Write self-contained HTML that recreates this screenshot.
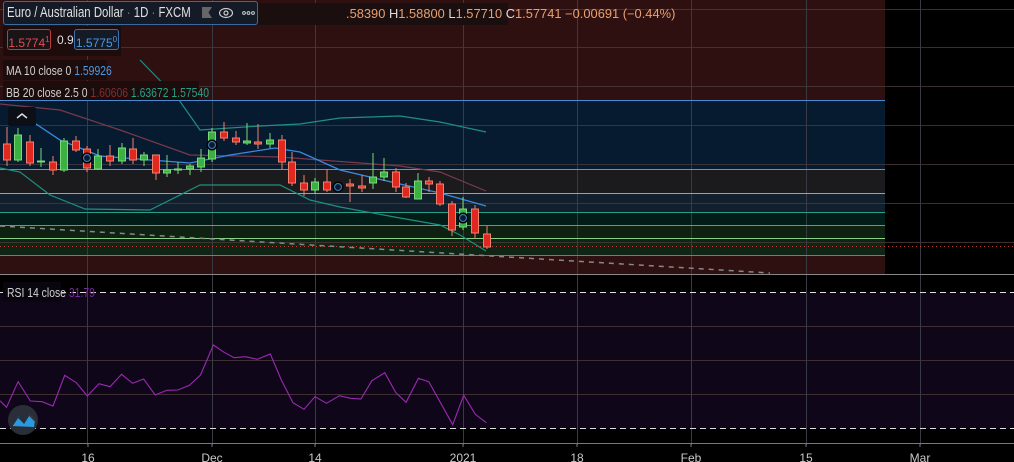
<!DOCTYPE html>
<html><head><meta charset="utf-8"><style>
html,body{margin:0;padding:0;background:#000;width:1014px;height:462px;overflow:hidden;font-family:"Liberation Sans",sans-serif}
.abs{position:absolute}
.lg{color:#d0d0d0;font-size:12px;white-space:nowrap;transform-origin:left top}
.c{transform:scaleX(0.8)}
</style></head><body>
<svg class="abs" style="left:0;top:0" width="1014" height="462" xmlns="http://www.w3.org/2000/svg">
<rect x="0" y="0" width="885" height="274" fill="#2f1010"/>
<rect x="0" y="100" width="885" height="69" fill="#071b30"/>
<rect x="0" y="169" width="885" height="24" fill="#1b1b1d"/>
<rect x="0" y="193" width="885" height="19" fill="#12202d"/>
<rect x="0" y="212" width="885" height="13" fill="#021c18"/>
<rect x="0" y="225" width="885" height="13" fill="#0f2212"/>
<rect x="0" y="238" width="885" height="17" fill="#102515"/>
<rect x="0" y="255" width="885" height="19" fill="#2f1010"/>
<rect x="0" y="292" width="1014" height="137" fill="#10061a"/>
<g stroke="#4a3a3a" stroke-width="1" opacity="0.8">
<line x1="0" y1="9.5" x2="1014" y2="9.5"/><line x1="0" y1="47.5" x2="1014" y2="47.5"/><line x1="0" y1="86.5" x2="1014" y2="86.5"/><line x1="0" y1="125.5" x2="1014" y2="125.5"/><line x1="0" y1="164.5" x2="1014" y2="164.5"/><line x1="0" y1="203.5" x2="1014" y2="203.5"/><line x1="0" y1="242.5" x2="1014" y2="242.5"/>
<line x1="0" y1="326.5" x2="1014" y2="326.5"/><line x1="0" y1="360.5" x2="1014" y2="360.5"/><line x1="0" y1="394.5" x2="1014" y2="394.5"/>
</g>
<g stroke="#3a3a44" stroke-width="1">
<line x1="87.5" y1="0" x2="87.5" y2="445"/><line x1="212.5" y1="0" x2="212.5" y2="445"/><line x1="315.5" y1="0" x2="315.5" y2="445"/><line x1="463.5" y1="0" x2="463.5" y2="445"/><line x1="577.5" y1="0" x2="577.5" y2="445"/><line x1="691.5" y1="0" x2="691.5" y2="445"/><line x1="806.5" y1="0" x2="806.5" y2="445"/><line x1="920.5" y1="0" x2="920.5" y2="445"/>
</g>
<g stroke-width="1">
<line x1="0" y1="100.5" x2="885" y2="100.5" stroke="#4a8ad0"/>
<line x1="0" y1="169.5" x2="885" y2="169.5" stroke="#8a8a90"/>
<line x1="0" y1="193.5" x2="885" y2="193.5" stroke="#6aaee0"/>
<line x1="0" y1="212.5" x2="885" y2="212.5" stroke="#26a08a"/>
<line x1="0" y1="225.5" x2="885" y2="225.5" stroke="#4caf50"/>
<line x1="0" y1="238.5" x2="885" y2="238.5" stroke="#8ad08a"/>
<line x1="0" y1="246.5" x2="1014" y2="246.5" stroke="#c04030" stroke-dasharray="1 3"/>
<line x1="0" y1="255.5" x2="885" y2="255.5" stroke="#e0503a"/>
<line x1="0" y1="274.5" x2="1014" y2="274.5" stroke="#888"/>
<line x1="0" y1="292.5" x2="1014" y2="292.5" stroke="#ddd" stroke-dasharray="6 4"/>
<line x1="0" y1="428.5" x2="1014" y2="428.5" stroke="#ddd" stroke-dasharray="6 4"/>
<line x1="0" y1="443.5" x2="1014" y2="443.5" stroke="#777"/>
</g>
<line x1="0" y1="226" x2="770" y2="273" stroke="#888" stroke-dasharray="5 5" stroke-width="1.5"/>
<polyline fill="none" stroke="#1f8f80" stroke-width="1.2" points="140,60 179,100 200,130 260,126 300,124 340,118 400,116 440,122 486,132"/>
<polyline fill="none" stroke="#1f8f80" stroke-width="1.2" points="0,168 20,172 50,195 85,209 150,210 200,185 280,185 310,200 340,207 400,218 440,225 460,235 486,251"/>
<polyline fill="none" stroke="#7a3a4a" stroke-width="1.2" points="0,104 60,110 120,130 190,155 280,157 320,160 400,166 440,172 486,191"/>
<polyline fill="none" stroke="#3a8ae0" stroke-width="1.3" points="30,120 60,140 100,156 150,160 190,163 230,155 275,148 300,152 340,170 400,184 440,193 486,206"/>
<g stroke-width="1">
<g stroke="#f08070" fill="#e0281e">
<line x1="7" y1="127" x2="7" y2="166"/><rect x="3.5" y="144" width="7" height="16"/>
<line x1="30" y1="135" x2="30" y2="166"/><rect x="26.5" y="142" width="7" height="21"/>
<line x1="53" y1="156" x2="53" y2="175"/><rect x="49.5" y="162" width="7" height="8"/>
<line x1="76" y1="136" x2="76" y2="152"/><rect x="72.5" y="141" width="7" height="9"/>
<line x1="87" y1="146" x2="87" y2="172"/><rect x="83.5" y="149" width="7" height="19"/>
<line x1="110" y1="145" x2="110" y2="166"/><rect x="106.5" y="156" width="7" height="5"/>
<line x1="133" y1="138" x2="133" y2="164"/><rect x="129.5" y="149" width="7" height="11"/>
<line x1="156" y1="155" x2="156" y2="180"/><rect x="152.5" y="155" width="7" height="18"/>
<line x1="224" y1="122" x2="224" y2="141"/><rect x="220.5" y="132" width="7" height="6"/>
<line x1="236" y1="131" x2="236" y2="145"/><rect x="232.5" y="138" width="7" height="4"/>
<line x1="258" y1="124" x2="258" y2="149"/><rect x="254.5" y="142" width="7" height="2"/>
<line x1="282" y1="135" x2="282" y2="169"/><rect x="278.5" y="140" width="7" height="22"/>
<line x1="292" y1="152" x2="292" y2="186"/><rect x="288.5" y="162" width="7" height="21"/>
<line x1="304" y1="175" x2="304" y2="196"/><rect x="300.5" y="183" width="7" height="7"/>
<line x1="327" y1="169" x2="327" y2="192"/><rect x="323.5" y="182" width="7" height="8"/>
<line x1="350" y1="179" x2="350" y2="202"/><rect x="346.5" y="184" width="7" height="2"/>
<line x1="362" y1="175" x2="362" y2="192"/><rect x="358.5" y="186" width="7" height="2"/>
<line x1="396" y1="168" x2="396" y2="192"/><rect x="392.5" y="172" width="7" height="15"/>
<line x1="406" y1="183" x2="406" y2="198"/><rect x="402.5" y="187" width="7" height="10"/>
<line x1="429" y1="177" x2="429" y2="192"/><rect x="425.5" y="181" width="7" height="3"/>
<line x1="440" y1="181" x2="440" y2="206"/><rect x="436.5" y="184" width="7" height="20"/>
<line x1="452" y1="201" x2="452" y2="236"/><rect x="448.5" y="204" width="7" height="26"/>
<line x1="475" y1="205" x2="475" y2="239"/><rect x="471.5" y="209" width="7" height="24"/>
<line x1="487" y1="226" x2="487" y2="249"/><rect x="483.5" y="234" width="7" height="13"/>
</g>
<g stroke="#7ada7a" fill="#3cb043">
<line x1="18" y1="128" x2="18" y2="162"/><rect x="14.5" y="135" width="7" height="25"/>
<line x1="41" y1="148" x2="41" y2="167"/><rect x="37.5" y="161" width="7" height="1"/>
<line x1="64" y1="138" x2="64" y2="172"/><rect x="60.5" y="141" width="7" height="29"/>
<line x1="98" y1="149" x2="98" y2="170"/><rect x="94.5" y="156" width="7" height="13"/>
<line x1="122" y1="143" x2="122" y2="164"/><rect x="118.5" y="148" width="7" height="13"/>
<line x1="144" y1="152" x2="144" y2="166"/><rect x="140.5" y="155" width="7" height="5"/>
<line x1="167" y1="155" x2="167" y2="177"/><rect x="163.5" y="170" width="7" height="3"/>
<line x1="178" y1="162" x2="178" y2="174"/><rect x="174.5" y="169" width="7" height="1"/>
<line x1="190" y1="164" x2="190" y2="175"/><rect x="186.5" y="166" width="7" height="3"/>
<line x1="201" y1="149" x2="201" y2="172"/><rect x="197.5" y="158" width="7" height="9"/>
<line x1="212" y1="128" x2="212" y2="162"/><rect x="208.5" y="132" width="7" height="27"/>
<line x1="247" y1="123" x2="247" y2="145"/><rect x="243.5" y="141" width="7" height="2"/>
<line x1="270" y1="133" x2="270" y2="148"/><rect x="266.5" y="140" width="7" height="4"/>
<line x1="315" y1="178" x2="315" y2="194"/><rect x="311.5" y="182" width="7" height="8"/>
<line x1="373" y1="153" x2="373" y2="189"/><rect x="369.5" y="177" width="7" height="6"/>
<line x1="384" y1="158" x2="384" y2="181"/><rect x="380.5" y="172" width="7" height="5"/>
<line x1="418" y1="173" x2="418" y2="199"/><rect x="414.5" y="181" width="7" height="18"/>
<line x1="463" y1="197" x2="463" y2="230"/><rect x="459.5" y="209" width="7" height="18"/>
</g>
<g fill="#0a1a30" stroke="#000" stroke-width="2">
<circle cx="87" cy="158" r="4.5"/><circle cx="212" cy="145" r="4.5"/><circle cx="338" cy="187" r="4.5"/><circle cx="463" cy="218" r="4.5"/>
</g>
<g fill="none" stroke="#3a70a8" stroke-width="1.3">
<circle cx="87" cy="158" r="3.5"/><circle cx="212" cy="145" r="3.5"/><circle cx="338" cy="187" r="3.5"/><circle cx="463" cy="218" r="3.5"/>
</g>
</g>
<rect x="8" y="107" width="28" height="19" rx="2" fill="#0c0f15"/>
<polyline points="17,118 22,114 27,118" fill="none" stroke="#ddd" stroke-width="1.5"/>
<polyline fill="none" stroke="#9a2ab0" stroke-width="1.1" points="0,400.7 6.5,407.3 18.1,381.7 30.4,401 42,401.7 53,406 64.7,375.3 76.3,382.7 87.3,396 99,383.7 110,386.7 121.6,374.3 132.6,383.3 143.6,379 155.2,395 166.8,390.3 177.8,390 189.5,385.3 200.5,375 213.4,345 223.1,351.7 234.1,357.7 245.7,356.7 257.4,359.3 270.3,354 281.3,380 293,402.7 304,409.3 315,396.7 326.6,403.3 339.5,395.7 350.5,398.3 360.9,399 371.9,380.7 384.8,372.7 395.8,392.7 406.1,402.3 418.4,378.3 428.8,381.7 452.7,424.7 463.7,395.3 475.3,414.3 486.3,422.7"/>
<circle cx="23" cy="420" r="15" fill="#2a2e38"/>
<path d="M12,426 L18,416 L24,423 L29,414 L35,420 L34,427 Z" fill="#2a9ae0"/>
<polyline points="12,426 18,417 24,423 29,415 35,421" fill="none" stroke="#2a2e38" stroke-width="1.2"/>
<g fill="#c8c8c8" font-size="12" font-family="Liberation Sans,sans-serif" text-anchor="middle">
<text x="88" y="462">16</text><text x="212" y="462">Dec</text><text x="315" y="462">14</text><text x="463" y="462">2021</text><text x="577" y="462">18</text><text x="691" y="462">Feb</text><text x="806" y="462">15</text><text x="920" y="462">Mar</text>
</g>
<g stroke="#777"><line x1="88" y1="444" x2="88" y2="447"/><line x1="212" y1="444" x2="212" y2="447"/><line x1="315" y1="444" x2="315" y2="447"/><line x1="463" y1="444" x2="463" y2="447"/><line x1="577" y1="444" x2="577" y2="447"/><line x1="691" y1="444" x2="691" y2="447"/><line x1="806" y1="444" x2="806" y2="447"/><line x1="920" y1="444" x2="920" y2="447"/></g>
</svg>

<div class="abs" style="left:258px;top:3px;width:250px;height:22px;background:#1a0e0e"></div>
<div class="abs lg" style="left:346px;top:7px;font-size:12.5px;color:#e8a070;transform:scaleX(1.03)">.58390 <span style="color:#ddd">H</span>1.58800 <span style="color:#ddd">L</span>1.57710 <span style="color:#ddd">C</span>1.57741 −0.00691 (−0.44%)</div>
<div class="abs" style="left:3px;top:1px;width:253px;height:22px;background:#141a26;border:1px solid #3a6aa0;border-radius:3px"></div>
<div class="abs lg" style="left:7px;top:4px;font-size:15px;color:#e0e0e0;transform:scaleX(0.76)">Euro / Australian Dollar <span style="color:#777">·</span> 1D <span style="color:#777">·</span> FXCM</div>
<div class="abs" style="left:202px;top:7px;width:10px;height:11px;background:#666;clip-path:polygon(0 0,100% 0,65% 50%,100% 100%,0 100%)"></div>
<svg class="abs" style="left:219px;top:5px" width="40" height="16"><ellipse cx="7" cy="8" rx="6.5" ry="4.5" fill="none" stroke="#ccc" stroke-width="1.2"/><circle cx="7" cy="8" r="2" fill="none" stroke="#ccc" stroke-width="1.2"/><circle cx="25" cy="8" r="1.4" fill="none" stroke="#ccc"/><circle cx="29.5" cy="8" r="1.4" fill="none" stroke="#ccc"/><circle cx="34" cy="8" r="1.4" fill="none" stroke="#ccc"/></svg>
<div class="abs" style="left:3px;top:26px;width:118px;height:30px;background:#1d0c0c"></div>
<div class="abs lg" style="left:7px;top:29px;width:42px;height:19px;border:1px solid #c0383a;border-radius:3px;background:#181418;color:#e05050;font-size:12px;line-height:19px;text-align:center">1.5774<sup style="font-size:8px">1</sup></div>
<div class="abs lg" style="left:57px;top:33px;color:#ddd">0.9</div>
<div class="abs lg" style="left:74px;top:29px;width:43px;height:19px;border:1px solid #3a70b0;border-radius:3px;background:#141a26;color:#4a9ae8;font-size:12px;line-height:19px;text-align:center">1.5775<sup style="font-size:8px">0</sup></div>
<div class="abs" style="left:3px;top:60px;width:104px;height:20px;background:#1d0c0c"></div>
<div class="abs lg c" style="left:6px;top:63px;font-size:13px;transform:scaleX(0.8)">MA 10 close 0 <span style="color:#4a9ae8">1.59926</span></div>
<div class="abs" style="left:3px;top:81px;width:196px;height:19px;background:#1d0c0c"></div>
<div class="abs lg c" style="left:6px;top:85px;font-size:13px">BB 20 close 2.5 0 <span style="color:#8a2a2a">1.60606</span> <span style="color:#26a08a">1.63672</span> <span style="color:#26a08a">1.57540</span></div>
<div class="abs" style="left:3px;top:282px;width:58px;height:20px;background:#0a0610"></div>
<div class="abs lg c" style="left:7px;top:285px;font-size:13px">RSI 14 close <span style="color:#7a2a9a">31.79</span></div>
</body></html>
